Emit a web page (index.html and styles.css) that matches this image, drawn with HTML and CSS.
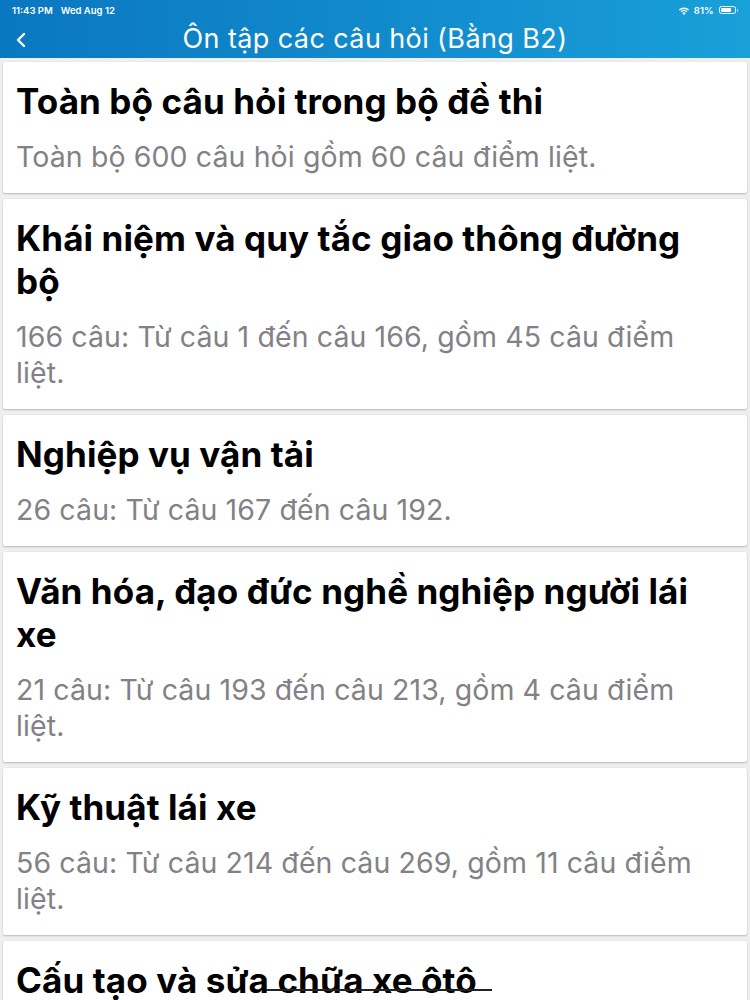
FILE: index.html
```html
<!DOCTYPE html>
<html lang="vi">
<head>
<meta charset="utf-8">
<link rel="stylesheet" href="styles.css">
</head>
<body>
<div class="top">
  <div class="status">
    <span class="time">11:43 PM<span class="gap"></span>Wed Aug 12</span>
    <span class="sys">
      <svg class="wifi" width="12" height="9" viewBox="0 0 12 9"><path d="M6 9 L4.2 7 A2.6 2.6 0 0 1 7.8 7 Z M2.6 5.3 A4.9 4.9 0 0 1 9.4 5.3 L8.5 6.3 A3.6 3.6 0 0 0 3.5 6.3 Z M0.9 3.6 A7.3 7.3 0 0 1 11.1 3.6 L10.2 4.6 A6 6 0 0 0 1.8 4.6 Z" fill="#fff"/></svg>
      <span class="pct">81%</span>
      <span class="battery"><span class="level"></span></span><span class="nub"></span>
    </span>
  </div>
  <div class="nav">
    <svg class="back" width="12" height="16" viewBox="0 0 12 16"><path d="M9 2 L3 8 L9 14" fill="none" stroke="#fff" stroke-width="2.4" stroke-linecap="round" stroke-linejoin="round"/></svg>
    <div class="title">Ôn tập các câu hỏi (Bằng B2)</div>
  </div>
</div>
<div class="list">
  <div class="card">
    <div class="h">Toàn bộ câu hỏi trong bộ đề thi</div>
    <div class="s">Toàn bộ 600 câu hỏi gồm 60 câu điểm liệt.</div>
  </div>
  <div class="card">
    <div class="h">Khái niệm và quy tắc giao thông đường bộ</div>
    <div class="s">166 câu: Từ câu 1 đến câu 166, gồm 45 câu điểm liệt.</div>
  </div>
  <div class="card">
    <div class="h">Nghiệp vụ vận tải</div>
    <div class="s">26 câu: Từ câu 167 đến câu 192.</div>
  </div>
  <div class="card">
    <div class="h">Văn hóa, đạo đức nghề nghiệp người lái xe</div>
    <div class="s">21 câu: Từ câu 193 đến câu 213, gồm 4 câu điểm liệt.</div>
  </div>
  <div class="card">
    <div class="h">Kỹ thuật lái xe</div>
    <div class="s">56 câu: Từ câu 214 đến câu 269, gồm 11 câu điểm liệt.</div>
  </div>
  <div class="card last">
    <div class="h">Cấu tạo và sửa chữa xe ôtô</div>
    <div class="s">35 câu: Từ câu 270 đến câu 304.</div>
    <span class="scratch"></span>
  </div>
</div>
</body>
</html>
```
FILE: styles.css
```css
html, body { margin: 0; padding: 0; }
body {
  width: 750px;
  height: 1000px;
  overflow: hidden;
  background: #efeff1;
  font-family: Inter, "Noto Sans", sans-serif;
}
.top {
  background: linear-gradient(90deg, #0a77c1 0%, #128ccd 55%, #19a0d9 100%);
  height: 58px;
  color: #fff;
}
.status {
  height: 20px;
  display: flex;
  justify-content: space-between;
  align-items: center;
  padding: 0 12px 0 12px;
  font-size: 9.5px;
  font-weight: 600;
}
.gap { display: inline-block; width: 8px; }
.sys { display: flex; align-items: center; gap: 3px; }
.wifi { margin-right: 1px; }
.pct { font-size: 9.5px; }
.battery {
  width: 17px; height: 8px; border: 1px solid #fff; border-radius: 2.5px;
  padding: 1px; box-sizing: border-box; display: flex; margin-left: 2px;
}
.level { width: 80%; background: #fff; border-radius: 1px; }
.nub { width: 1.5px; height: 3px; background: rgba(255,255,255,.7); margin-left: -2px; border-radius: 0 1px 1px 0; }
.nav {
  height: 38px;
  display: flex;
  align-items: center;
  position: relative;
}
.back { position: absolute; left: 15px; top: 12px; }
.title {
  flex: 1;
  text-align: center;
  font-size: 27px;
  letter-spacing: 0.4px;
  line-height: 38px;
}
.list {
  padding: 4px 3px 0;
  display: flex;
  flex-direction: column;
  gap: 6px;
}
.card {
  background: #fff;
  border-radius: 2px;
  box-shadow: 0 1px 2px rgba(0,0,0,.22), 0 0 1px rgba(0,0,0,.12);
  padding: 18px 20px 18px 13px;
  position: relative;
}
.h {
  font-size: 35px;
  font-weight: 700;
  line-height: 43px;
  color: #000;
  letter-spacing: 0.1px;
}
.s {
  margin-top: 16px;
  font-size: 28.5px;
  line-height: 36px;
  color: #828286;
  letter-spacing: 0.1px;
}
.scratch {
  position: absolute;
  left: 263px;
  top: 48px;
  width: 226px;
  height: 2px;
  background: #222;
}
```
